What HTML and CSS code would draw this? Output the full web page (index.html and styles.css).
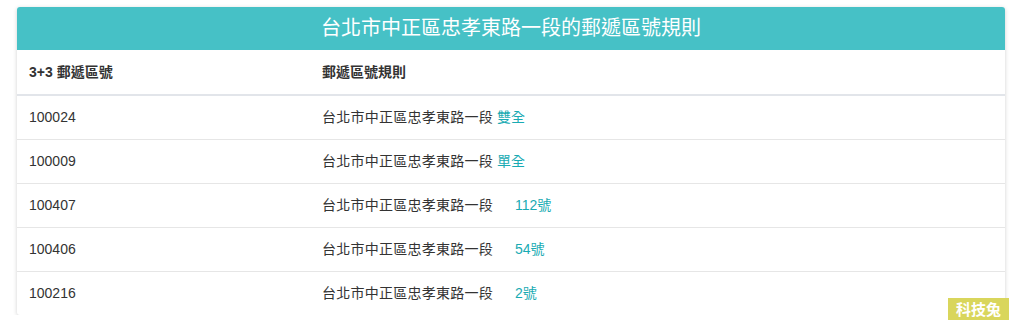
FILE: index.html
```html
<!DOCTYPE html>
<html lang="zh-Hant">
<head>
<meta charset="utf-8">
<title>台北市中正區忠孝東路一段的郵遞區號規則</title>
<link rel="stylesheet" href="styles.css">
</head>
<body>
<div class="card">
  <div class="card-title">台北市中正區忠孝東路一段的郵遞區號規則</div>
  <table class="zip-table">
    <thead>
      <tr><th class="col-code">3+3 郵遞區號</th><th>郵遞區號規則</th></tr>
    </thead>
    <tbody>
      <tr><td>100024</td><td><span class="addr">台北市中正區忠孝東路一段</span> <a class="rule" href="#">雙全</a></td></tr>
      <tr><td>100009</td><td><span class="addr">台北市中正區忠孝東路一段</span> <a class="rule" href="#">單全</a></td></tr>
      <tr><td>100407</td><td><span class="addr">台北市中正區忠孝東路一段</span> <a class="rule num" href="#">112號</a></td></tr>
      <tr><td>100406</td><td><span class="addr">台北市中正區忠孝東路一段</span> <a class="rule num" href="#">54號</a></td></tr>
      <tr><td>100216</td><td><span class="addr">台北市中正區忠孝東路一段</span> <a class="rule num" href="#">2號</a></td></tr>
    </tbody>
  </table>
</div>
<div class="watermark">科技兔</div>
</body>
</html>
```
FILE: styles.css
```css
html, body {
  margin: 0;
  background: #ffffff;
}
body {
  padding: 7px 19px 0 17px;
  font-family: "Liberation Sans", Arial, "Noto Sans CJK TC", sans-serif;
  font-size: 14px;
  color: #333333;
}
.card {
  background: #fff;
  border-radius: 3px;
  box-shadow: 0 1px 4px rgba(0, 0, 0, 0.18);
  overflow: hidden;
}
.card-title {
  background: #46c1c6;
  color: #ffffff;
  height: 43px;
  line-height: 43px;
  text-align: center;
  font-size: 20px;
}
.zip-table {
  width: 100%;
  border-collapse: collapse;
}
.zip-table th,
.zip-table td {
  text-align: left;
  padding: 0 12px;
  line-height: 20px;
  vertical-align: middle;
  box-sizing: border-box;
}
.zip-table th {
  font-weight: bold;
  height: 45px;
  padding-bottom: 1px;
  border-bottom: 2px solid #e2e5ea;
}
.zip-table td {
  height: 44px;
}
.zip-table .col-code {
  width: 293px;
}
.zip-table tbody tr + tr td {
  border-top: 1px solid #e6e6e6;
}
.addr {
  letter-spacing: 0.25px;
}
.rule {
  color: #19abb3;
  text-decoration: none;
}
.rule.num {
  margin-left: 18px;
}
.watermark {
  position: absolute;
  left: 948px;
  top: 298px;
  width: 61px;
  height: 22px;
  line-height: 22px;
  background: #d9d65c;
  color: #ffffff;
  font-weight: bold;
  font-size: 15px;
  text-align: center;
  font-family: "Noto Sans CJK TC", sans-serif;
}
```
